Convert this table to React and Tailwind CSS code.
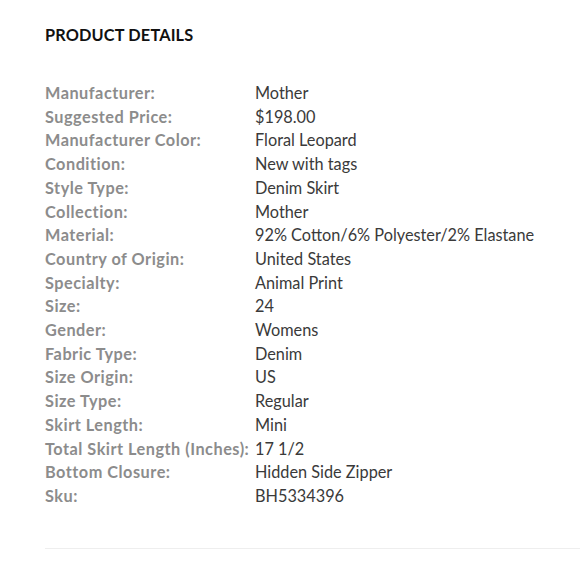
const details = [
  ['Manufacturer:', 'Mother'],
  ['Suggested Price:', '$198.00'],
  ['Manufacturer Color:', 'Floral Leopard'],
  ['Condition:', 'New with tags'],
  ['Style Type:', 'Denim Skirt'],
  ['Collection:', 'Mother'],
  ['Material:', '92% Cotton/6% Polyester/2% Elastane'],
  ['Country of Origin:', 'United States'],
  ['Specialty:', 'Animal Print'],
  ['Size:', '24'],
  ['Gender:', 'Womens'],
  ['Fabric Type:', 'Denim'],
  ['Size Origin:', 'US'],
  ['Size Type:', 'Regular'],
  ['Skirt Length:', 'Mini'],
  ['Total Skirt Length (Inches):', '17 1/2'],
  ['Bottom Closure:', 'Hidden Side Zipper'],
  ['Sku:', 'BH5334396'],
];

export default function App() {
  return (
    <div className="min-h-screen w-[580px] bg-white pl-[45px] pt-[26px] font-['Lato',sans-serif]">
      <h2 className="text-[16.3px] font-bold leading-[18px] tracking-[0.01em] text-[#111]">PRODUCT DETAILS</h2>

      <div className="mt-[37px] grid grid-cols-[210px_1fr] text-[16.3px] leading-[23.7px]">
        {details.map(([label, value]) => (
          <div key={label} className="contents">
            <div className="whitespace-nowrap font-bold tracking-[0.5px] text-[#8c8c8c]">{label}</div>
            <div className="whitespace-nowrap text-[#3a3a3a]">{value}</div>
          </div>
        ))}
      </div>

      <div className="mt-[40px] border-t border-[#eeeeee]" />
    </div>
  );
}
